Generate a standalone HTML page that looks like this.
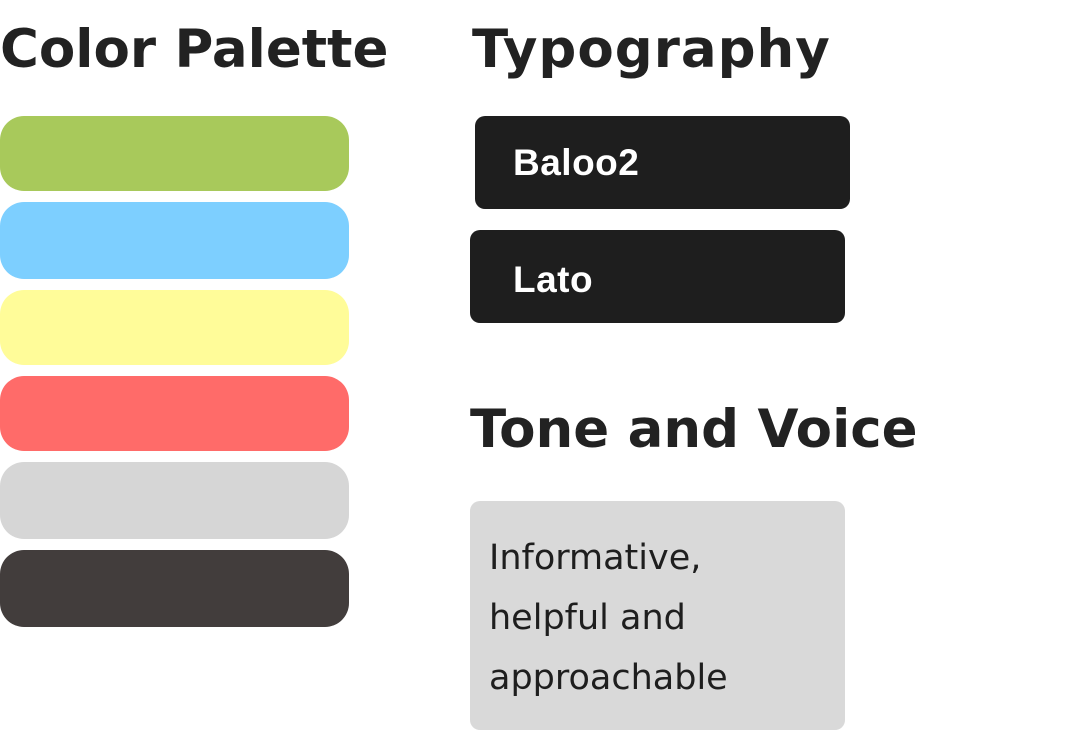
<!DOCTYPE html>
<html><head><meta charset="utf-8"><style>
body{margin:0;width:1066px;height:731px;background:#fff;position:relative;overflow:hidden;font-family:"Liberation Sans",sans-serif;color:#1e1e1e}
.h{position:absolute;font-family:"DejaVu Sans",sans-serif;font-size:53px;font-weight:bold;line-height:1;margin:0;white-space:nowrap;letter-spacing:0;color:#222}
.s{position:absolute;left:0;width:349px;border-radius:24px}
.b{position:absolute;background:#1e1e1e;border-radius:10px;color:#fff;font-weight:bold;font-size:37px;letter-spacing:0.5px;box-sizing:border-box;padding-left:43px}
</style></head><body>
<div class="h" style="left:0;top:23px">Color Palette</div>
<div class="s" style="top:116px;height:75px;background:#a8c95b"></div>
<div class="s" style="top:202px;height:77px;background:#7dcfff"></div>
<div class="s" style="top:290px;height:75px;background:#fffc99"></div>
<div class="s" style="top:376px;height:75px;background:#ff6b69"></div>
<div class="s" style="top:462px;height:77px;background:#d6d6d6"></div>
<div class="s" style="top:550px;height:77px;background:#423d3c"></div>
<div class="h" style="left:472px;top:23px;letter-spacing:1px">Typography</div>
<div class="b" style="left:475px;top:116px;width:375px;height:93px;line-height:93px;padding-left:38px">Baloo2</div>
<div class="b" style="left:470px;top:230px;width:375px;height:93px;line-height:100px">Lato</div>
<div class="h" style="left:470px;top:403px">Tone and Voice</div>
<div style="position:absolute;left:470px;top:501px;width:375px;height:229px;background:#d9d9d9;border-radius:10px;box-sizing:border-box;padding:27px 0 0 19px;font-family:'DejaVu Sans',sans-serif;font-size:35px;line-height:60px;color:#1e1e1e">Informative,<br>helpful and<br>approachable</div>
</body></html>
